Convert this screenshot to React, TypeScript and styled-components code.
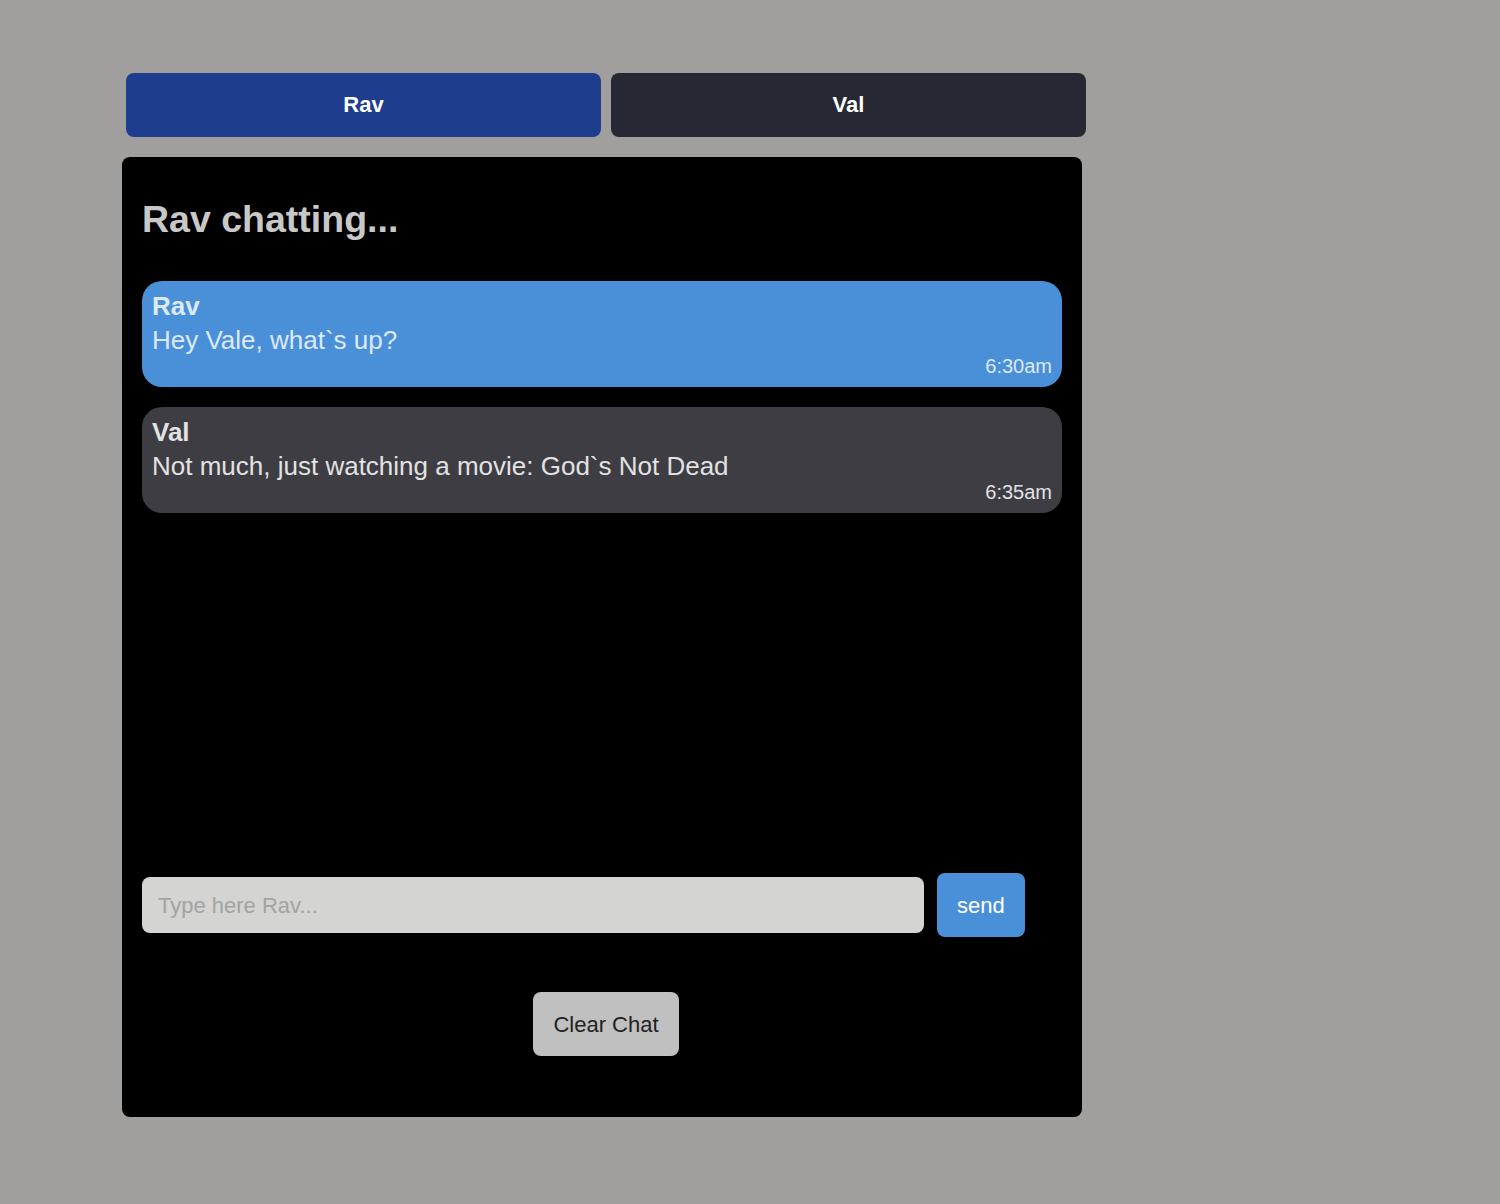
import React, { useState } from "react";
import styled, { createGlobalStyle } from "styled-components";

const GlobalStyle = createGlobalStyle`
  html, body {
    margin: 0;
    padding: 0;
    background: #a09f9d;
    font-family: "Liberation Sans", Arial, Helvetica, sans-serif;
  }
  #root {
    min-height: 100vh;
  }
`;

const Page = styled.div`
  padding: 73px 0 0 122px;
  display: flex;
  flex-direction: column;
  gap: 20px;
`;

const TabRow = styled.div`
  width: 960px;
  margin-left: 4px;
  display: flex;
  gap: 10px;
`;

const Tab = styled.button<{ $active: boolean; $color: string }>`
  flex: 1;
  height: 64px;
  border: none;
  border-radius: 8px;
  background: ${(p) => p.$color};
  color: #ffffff;
  font-family: "Liberation Sans", Arial, sans-serif;
  font-weight: 700;
  font-size: 22px;
  padding-top: 1px;
  cursor: pointer;
`;

const Panel = styled.div`
  width: 960px;
  height: 960px;
  box-sizing: border-box;
  background: #000000;
  border-radius: 8px;
  padding: 20px;
  display: flex;
  flex-direction: column;
`;

const Heading = styled.h1`
  margin: 20px 0 40px 0;
  font-size: 37.5px;
  line-height: 44px;
  font-weight: 700;
  color: #c8c8c8;
`;

const MessageList = styled.div`
  flex: 1;
  display: flex;
  flex-direction: column;
  gap: 20px;
`;

const Bubble = styled.div<{ $bg: string; $fg: string }>`
  background: ${(p) => p.$bg};
  color: ${(p) => p.$fg};
  border-radius: 20px;
  padding: 8px 10px 9px 10px;
  display: flex;
  flex-direction: column;
`;

const Sender = styled.div`
  font-weight: 700;
  font-size: 26px;
  line-height: 34px;
`;

const Text = styled.div`
  font-size: 26px;
  line-height: 34px;
`;

const Time = styled.div`
  align-self: flex-end;
  font-size: 20px;
  line-height: 24px;
  margin-top: -3px;
`;

const InputRow = styled.div`
  display: flex;
  align-items: center;
  gap: 13px;
`;

const Input = styled.input`
  width: 85%;
  height: 56px;
  box-sizing: border-box;
  border: none;
  outline: none;
  border-radius: 8px;
  background: #d4d4d2;
  padding: 1px 16px 0 16px;
  font-family: "Liberation Sans", Arial, sans-serif;
  font-size: 22px;
  color: #222;
  &::placeholder {
    color: #a3a3a3;
  }
`;

const SendButton = styled.button`
  height: 64px;
  padding: 1px 20px 0 20px;
  border: none;
  border-radius: 8px;
  background: #4a90d9;
  color: #ffffff;
  font-family: "Liberation Sans", Arial, sans-serif;
  font-size: 22px;
  cursor: pointer;
`;

const ClearRow = styled.div`
  display: flex;
  justify-content: center;
  margin: 55px 0 41px 8px;
`;

const ClearButton = styled.button`
  height: 64px;
  padding: 1px 20px 0 20px;
  border: none;
  border-radius: 8px;
  background: #c0c0c0;
  color: #222222;
  font-family: "Liberation Sans", Arial, sans-serif;
  font-size: 22px;
  cursor: pointer;
`;

type Msg = { sender: string; text: string; time: string };

const initial: Msg[] = [
  { sender: "Rav", text: "Hey Vale, what`s up?", time: "6:30am" },
  { sender: "Val", text: "Not much, just watching a movie: God`s Not Dead", time: "6:35am" },
];

export default function App() {
  const [user, setUser] = useState("Rav");
  const [messages, setMessages] = useState<Msg[]>(initial);
  const [draft, setDraft] = useState("");

  const send = () => {
    if (!draft.trim()) return;
    setMessages([...messages, { sender: user, text: draft, time: "now" }]);
    setDraft("");
  };

  return (
    <>
      <GlobalStyle />
      <Page>
        <TabRow>
          <Tab $active={user === "Rav"} $color="#1e3d8f" onClick={() => setUser("Rav")}>
            Rav
          </Tab>
          <Tab $active={user === "Val"} $color="#262834" onClick={() => setUser("Val")}>
            Val
          </Tab>
        </TabRow>
        <Panel>
          <Heading>{user} chatting...</Heading>
          <MessageList>
            {messages.map((m, i) => (
              <Bubble
                key={i}
                $bg={m.sender === "Rav" ? "#4a90d9" : "#3e3d43"}
                $fg={m.sender === "Rav" ? "#dce9f8" : "#e2e2e2"}
              >
                <Sender>{m.sender}</Sender>
                <Text>{m.text}</Text>
                <Time>{m.time}</Time>
              </Bubble>
            ))}
          </MessageList>
          <InputRow>
            <Input
              placeholder={`Type here ${user}...`}
              value={draft}
              onChange={(e) => setDraft(e.target.value)}
            />
            <SendButton onClick={send}>send</SendButton>
          </InputRow>
          <ClearRow>
            <ClearButton onClick={() => setMessages([])}>Clear Chat</ClearButton>
          </ClearRow>
        </Panel>
      </Page>
    </>
  );
}
